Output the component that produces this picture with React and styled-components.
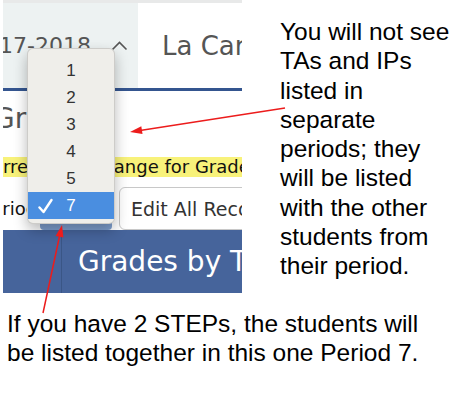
import React from 'react';
import styled, { createGlobalStyle } from 'styled-components';

const GlobalStyle = createGlobalStyle`
  body {
    margin: 0;
    background: #fff;
  }
`;

const Page = styled.div`
  position: relative;
  width: 475px;
  height: 405px;
  background: #fff;
  overflow: hidden;
`;

const TopRow = styled.div`
  display: flex;
  align-items: flex-start;
`;

const Shot = styled.div`
  position: relative;
  width: 239px;
  height: 293px;
  margin-left: 3px;
  display: flex;
  flex-direction: column;
  overflow: hidden;
  font-family: "DejaVu Sans", sans-serif;
`;

const TopStrip = styled.div`
  height: 3px;
  background: #e8e9e9;
`;

const TabRow = styled.div`
  display: flex;
  height: 85px;
`;

const YearTab = styled.div`
  width: 135px;
  flex-shrink: 0;
  display: flex;
  align-items: center;
  justify-content: flex-end;
  gap: 20px;
  padding-right: 10px;
  box-sizing: border-box;
  background: #edf2f2;
  color: #555;
  font-size: 22px;
  white-space: nowrap;
  overflow: hidden;

  svg {
    flex-shrink: 0;
  }
`;

const SchoolTab = styled.div`
  flex: 1;
  display: flex;
  align-items: center;
  padding-left: 24px;
  background: #fff;
  color: #555;
  font-size: 26px;
  white-space: nowrap;
  overflow: hidden;
`;

const Rule = styled.div`
  height: 3px;
  background: #34558f;
`;

const TitleArea = styled.div`
  height: 66px;
  padding-top: 11px;
  box-sizing: border-box;
  color: #555;
  font-size: 28px;
  white-space: nowrap;
`;

const Title = styled.span`
  display: inline-block;
  margin-left: -10px;
`;

const Notice = styled.div`
  height: 20px;
  background: #f8f27a;
  color: #111;
  font-size: 18px;
  line-height: 20px;
  white-space: nowrap;
  text-indent: -24px;
`;

const ControlRow = styled.div`
  height: 53px;
  padding-top: 10px;
  box-sizing: border-box;
  display: flex;
  align-items: stretch;
`;

const Label = styled.div`
  flex: 0 0 49px;
  min-width: 0;
  margin-left: -22px;
  display: flex;
  align-items: center;
  color: #111;
  font-size: 18px;
  white-space: nowrap;
`;

const Select = styled.div`
  flex: 0 0 72px;
  margin-left: 10px;
  border-radius: 4px;
  background: #7fa0d0;
`;

const EditButton = styled.div`
  flex: 0 0 150px;
  margin-left: 7px;
  display: flex;
  align-items: center;
  padding-left: 11px;
  border: 1px solid #c8c8c8;
  border-radius: 6px;
  background: #fff;
  color: #333;
  font-size: 19px;
  white-space: nowrap;
`;

const NavBar = styled.div`
  flex: 1;
  display: flex;
  background: #46649b;
`;

const SideCell = styled.div`
  width: 58px;
  flex-shrink: 0;
  border-right: 1px solid #3a5686;
`;

const NavTitle = styled.div`
  display: flex;
  align-items: center;
  padding-left: 16px;
  color: #fff;
  font-size: 28px;
  white-space: nowrap;
`;

const Menu = styled.div`
  position: absolute;
  left: 24px;
  top: 48px;
  width: 86px;
  padding: 8px 0 4px;
  background: #efeeea;
  border: 1px solid rgba(0, 0, 0, 0.14);
  border-radius: 6px;
  box-shadow: 0 6px 14px rgba(0, 0, 0, 0.28);
  font-family: "Liberation Sans", Arial, sans-serif;
  font-size: 17px;
`;

const MenuItem = styled.div`
  height: 27px;
  display: grid;
  grid-template-columns: 28px 1fr 28px;
  align-items: center;
  background: ${p => (p.$active ? '#4a8ee0' : 'transparent')};
  color: ${p => (p.$active ? '#fff' : '#333')};
`;

const Check = styled.div`
  padding-left: 10px;
  display: flex;
  align-items: center;
`;

const Num = styled.div`
  text-align: center;
`;

const Note = styled.div`
  margin: 17px 0 0 38px;
  font-family: "Liberation Sans", Arial, sans-serif;
  font-size: 24.5px;
  line-height: 29.25px;
  color: #000;
`;

const Caption = styled.div`
  margin: 17px 0 0 7px;
  font-family: "Liberation Sans", Arial, sans-serif;
  font-size: 24.5px;
  line-height: 28.5px;
  color: #000;
`;

const Arrows = styled.svg`
  position: absolute;
  left: 0;
  top: 0;
  pointer-events: none;
`;

const periods = ['1', '2', '3', '4', '5', '7'];

export default function App() {
  return (
    <Page>
      <GlobalStyle />
      <TopRow>
        <Shot>
          <TopStrip />
          <TabRow>
            <YearTab>
              <span>2017-2018</span>
              <svg width="17" height="10" viewBox="0 0 17 10">
                <path d="M1.5 8.5 L8.5 1.5 L15.5 8.5" fill="none" stroke="#555" strokeWidth="1.6" />
              </svg>
            </YearTab>
            <SchoolTab>La Carrera</SchoolTab>
          </TabRow>
          <Rule />
          <TitleArea>
            <Title>Grades</Title>
          </TitleArea>
          <Notice>Current Term Range for Grades</Notice>
          <ControlRow>
            <Label>Period</Label>
            <Select />
            <EditButton>Edit All Records</EditButton>
          </ControlRow>
          <NavBar>
            <SideCell />
            <NavTitle>Grades by Teacher</NavTitle>
          </NavBar>
          <Menu>
            {periods.map(p => (
              <MenuItem key={p} $active={p === '7'}>
                <Check>
                  {p === '7' && (
                    <svg width="15" height="16" viewBox="0 0 15 16">
                      <path d="M1.5 9.5 L5.5 14 L13.5 2" fill="none" stroke="#fff" strokeWidth="2.4" strokeLinecap="round" strokeLinejoin="round" />
                    </svg>
                  )}
                </Check>
                <Num>{p}</Num>
              </MenuItem>
            ))}
          </Menu>
        </Shot>
        <Note>
          You will not see<br />
          TAs and IPs<br />
          listed in<br />
          separate<br />
          periods; they<br />
          will be listed<br />
          with the other<br />
          students from<br />
          their period.
        </Note>
      </TopRow>
      <Caption>
        If you have 2 STEPs, the students will<br />
        be listed together in this one Period 7.
      </Caption>
      <Arrows width="475" height="405" viewBox="0 0 475 405">
        <line x1="285" y1="108" x2="140" y2="130.5" stroke="#ec1c1c" strokeWidth="1.5" />
        <polygon points="130,132 142.5,134.1 141.3,126.2" fill="#ec1c1c" />
        <line x1="43" y1="313" x2="60" y2="234" stroke="#ec1c1c" strokeWidth="1.5" />
        <polygon points="62,225 63.4,237.6 55.6,235.9" fill="#ec1c1c" />
      </Arrows>
    </Page>
  );
}
